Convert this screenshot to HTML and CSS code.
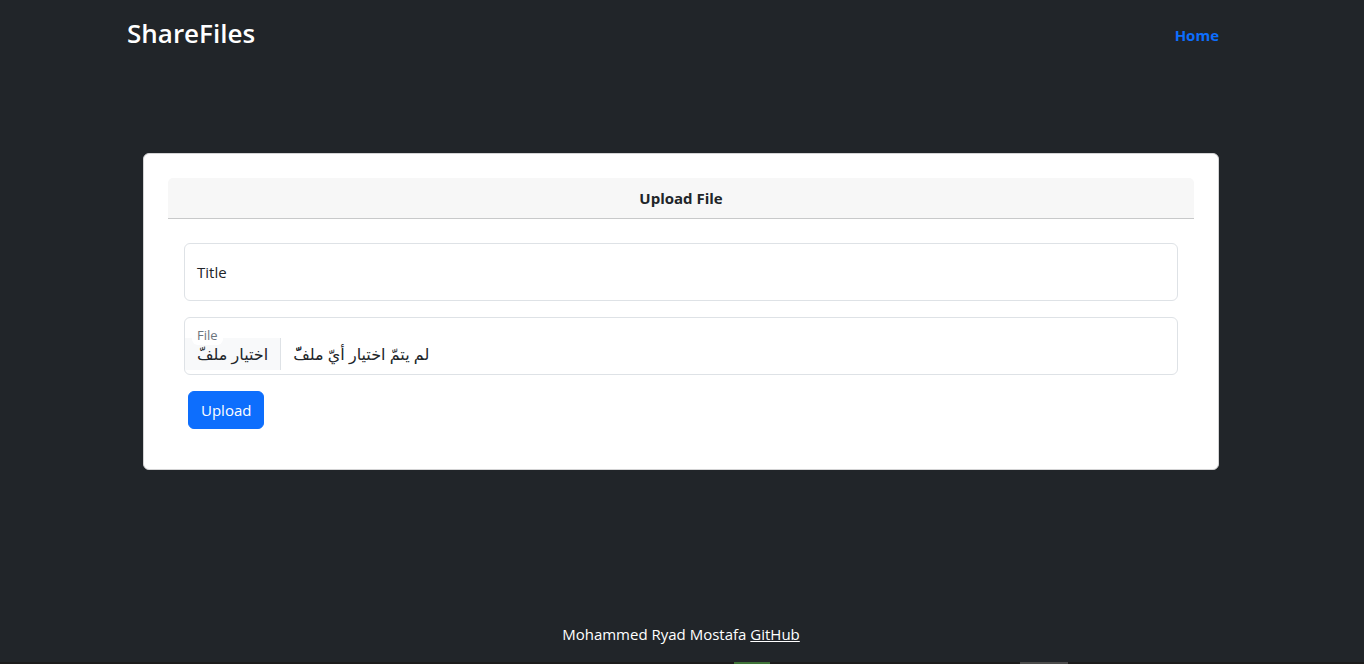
FILE: index.html
```html
<!DOCTYPE html>
<html lang="en">
<head>
<meta charset="utf-8">
<meta name="viewport" content="width=device-width, initial-scale=1">
<title>ShareFiles</title>
<link rel="stylesheet" href="styles.css">
</head>
<body>
<div class="cover">
  <header class="masthead">
    <h3 class="brand">ShareFiles</h3>
    <nav><a class="nav-link" href="#">Home</a></nav>
  </header>
  <main class="content">
    <div class="card">
      <div class="card-header">Upload File</div>
      <form class="card-body">
        <div class="field">
          <input class="control" type="text" id="title" name="title">
          <label class="field-label" for="title">Title</label>
        </div>
        <div class="field">
          <label class="file-control" for="file">
            <span class="file-caption">File</span>
            <span class="file-row">
              <span class="file-button" lang="ar" dir="rtl">اختيار ملفّ</span>
              <span class="file-name" lang="ar" dir="rtl">لم يتمّ اختيار أيّ ملفّّ</span>
            </span>
          </label>
          <input class="file-input" type="file" id="file" name="file">
        </div>
        <button class="button" type="submit">Upload</button>
      </form>
    </div>
  </main>
  <footer class="footer">Mohammed Ryad Mostafa <a href="#">GitHub</a></footer>
</div>
<div class="edge"><span class="edge-green"></span><span class="edge-gray"></span></div>
</body>
</html>
```
FILE: styles.css
```css
*, *::before, *::after { box-sizing: border-box; }

body {
  margin: 0;
  min-height: 100vh;
  display: flex;
  flex-direction: column;
  background: #212529;
  color: #212529;
  font-family: "Segoe UI", "Open Sans", "Noto Sans", "DejaVu Sans", sans-serif;
  font-size: 15px;
  line-height: 24px;
}

.cover {
  flex: 1;
  display: flex;
  flex-direction: column;
  justify-content: space-between;
  width: calc(100% - 2px);
  max-width: 1140px;
  margin-inline: auto;
  padding: 16px;
  translate: -1px;
}

.masthead {
  display: flex;
  justify-content: space-between;
  align-items: flex-start;
  padding-right: 16px;
}

.brand {
  margin: 0;
  color: #fff;
  font-size: 26px;
  font-weight: 600;
  line-height: 34px;
}

.nav-link {
  display: block;
  padding-top: 7px;
  color: #0d6efd;
  font-weight: 700;
  text-decoration: none;
}

.content { padding: 0 16px 50px; }

.card {
  padding: 24px;
  background: #fff;
  border: 1px solid #d3d3d4;
  border-radius: 6px;
}

.card-header {
  padding: 8px 16px;
  background: #f7f7f7;
  border-bottom: 1px solid #c8c9ca;
  border-radius: 5px 5px 0 0;
  font-weight: 700;
  text-align: center;
}

.card-body { padding: 24px 16px 16px; }

.field {
  position: relative;
  margin-bottom: 16px;
}

.control,
.file-control {
  display: block;
  width: 100%;
  height: 58px;
  background: #fff;
  border: 1px solid #dee2e6;
  border-radius: 6px;
}

.control {
  padding: 16px 12px;
  color: inherit;
  font: inherit;
}

.field-label {
  position: absolute;
  top: 17px;
  left: 13px;
  pointer-events: none;
}

.control:focus + .field-label {
  top: 5px;
  font-size: 13px;
  color: #6c757d;
}

.file-control { padding-top: 20px; }

.file-caption {
  position: absolute;
  top: 8px;
  left: 8px;
  padding: 0 5px;
  background: #fff;
  border-radius: 6px;
  color: #6c757d;
  font-size: 13px;
  line-height: 20px;
}

.file-row {
  display: flex;
  font-size: 16px;
  line-height: 32px;
}

.file-button {
  padding: 0 12px;
  background: #f8f9fa;
  border-right: 1px solid #dee2e6;
}

.file-name { padding-left: 12px; }

.file-input {
  position: absolute;
  inset: 0;
  width: 100%;
  opacity: 0;
  cursor: pointer;
}

.button {
  display: block;
  margin: 0 4px;
  padding: 6px 12px;
  background: #0d6efd;
  border: 1px solid #0d6efd;
  border-radius: 6px;
  color: #fff;
  font: inherit;
}

.footer {
  color: #fff;
  text-align: center;
}

.footer a { color: #fff; }

.edge {
  display: grid;
  grid-template-columns: 734fr 36fr 250fr 48fr 296fr;
  height: 2px;
  background: #1c1c1b;
}

.edge-green { grid-column: 2; background: #3e7337; }
.edge-gray { grid-column: 4; background: #4c4c4c; }
```
